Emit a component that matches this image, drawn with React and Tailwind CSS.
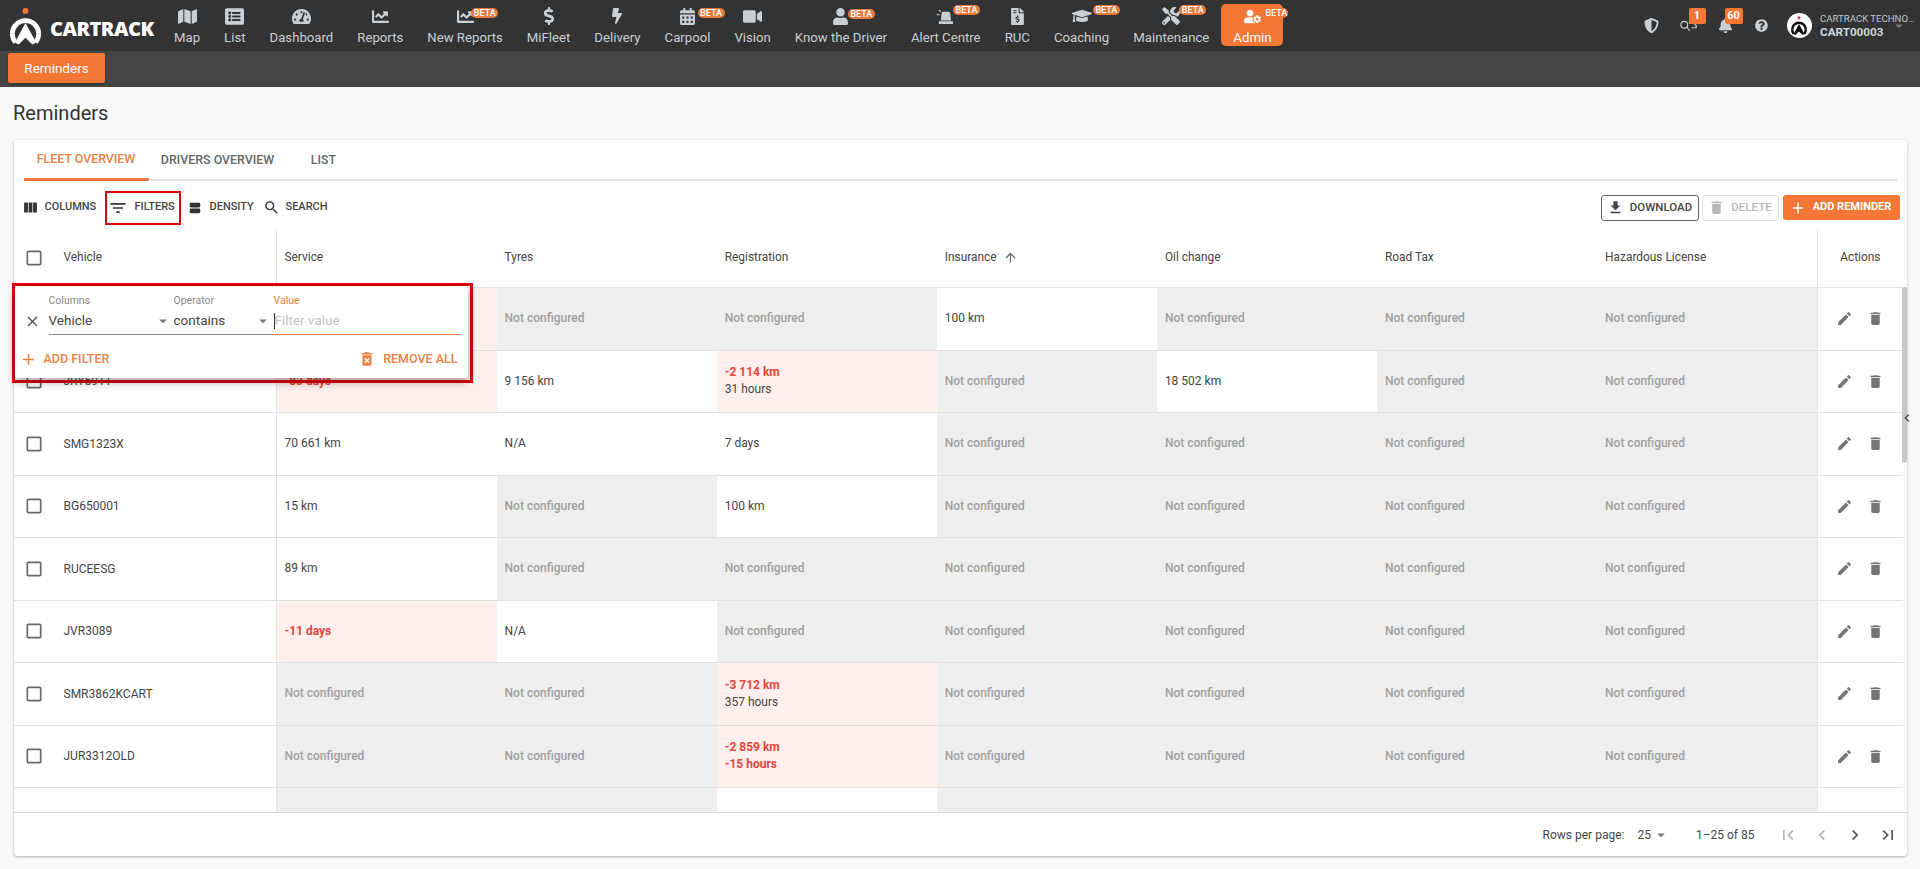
import React from "react";
import {
  FaMap, FaListAlt, FaTachometerAlt, FaChartLine, FaDollarSign, FaBolt, FaCalendarAlt, FaVideo, FaUser,
  FaFileInvoiceDollar, FaGraduationCap, FaTools, FaUserCog, FaShieldAlt, FaBell, FaQuestionCircle,
} from "react-icons/fa";
import {
  MdViewColumn, MdFilterList, MdViewAgenda, MdSearch, MdFileDownload, MdDelete, MdAdd, MdEdit, MdDeleteForever,
  MdClose, MdArrowDropDown, MdArrowUpward, MdFirstPage, MdChevronLeft, MdChevronRight, MdLastPage, MdCheckBoxOutlineBlank,
} from "react-icons/md";

function LogoMark({ className, fg = "#ffffff", dot = "#f47735" }) {
  return (
    <svg viewBox="0 0 36 38" className={className}>
      <circle cx="18" cy="3.5" r="3" fill={dot} />
      <path d="M4.5 27 A13.5 13.5 0 0 1 31.5 27" fill="none" stroke={fg} strokeWidth="5" />
      <path d="M2 27 h5 c0 3 1 5 2 6.5 l-3 4 C3.5 35 2 31.500 2 27 Z" fill={fg} />
      <path d="M34 27 h-5 c0 3 -1 5 -2 6.500 l3 4 C32.500 35 34 31.500 34 27 Z" fill={fg} />
      <path d="M18 16 L29 36 L25 38 L18 31 L11 38 L7 36 Z" fill={fg} />
    </svg>
  );
}

function SirenIcon({ className }) {
  return (
    <svg viewBox="0 0 24 20" className={className} fill="currentColor">
      <path d="M7 6 a2 2 0 0 1 2 -2 h7 a2 2 0 0 1 2 2 l1 9 H6 Z" />
      <rect x="3.500" y="16" width="18" height="3.500" rx="0.500" />
      <path d="M1 7 h3.500 v1.500 H1 Z M4.300 1.500 l2.200 2 -1 1 -2.200 -2 Z" />
    </svg>
  );
}

function SearchCarIcon({ className }) {
  return (
    <svg viewBox="0 0 24 16" className={className} fill="none" stroke="currentColor" strokeWidth="1.500">
      <circle cx="7" cy="7" r="4.500" />
      <path d="M10.500 10.500 L14.500 15" />
      <path d="M13 5 h7 l3 3 v3 h-6" />
    </svg>
  );
}

const navItems = [
  { label: "Map", Icon: FaMap, size: "text-[19px]" },
  { label: "List", Icon: FaListAlt, size: "text-[19px]" },
  { label: "Dashboard", Icon: FaTachometerAlt, size: "text-[19px]" },
  { label: "Reports", Icon: FaChartLine, size: "text-[17px]" },
  { label: "New Reports", Icon: FaChartLine, size: "text-[17px]", beta: "left-[56px] top-[4px]" },
  { label: "MiFleet", Icon: FaDollarSign, size: "text-[18px]" },
  { label: "Delivery", Icon: FaBolt, size: "text-[16px]", low: true },
  { label: "Carpool", Icon: FaCalendarAlt, size: "text-[17px]", beta: "left-[45px] top-[4px]" },
  { label: "Vision", Icon: FaVideo, size: "text-[19px]" },
  { label: "Know the Driver", Icon: FaUser, size: "text-[17px]", beta: "left-[65px] top-[5px]" },
  { label: "Alert Centre", Icon: SirenIcon, size: "w-[19px] h-[17px]", beta: "left-[54px] top-[1px]" },
  { label: "RUC", Icon: FaFileInvoiceDollar, size: "text-[17px]" },
  { label: "Coaching", Icon: FaGraduationCap, size: "text-[20px]", beta: "left-[51px] top-[1px]" },
  { label: "Maintenance", Icon: FaTools, size: "text-[18px]", beta: "left-[58px] top-[1px]" },
];

function Beta({ pos }) {
  return (
    <span className={`absolute ${pos} flex h-[10px] w-[27px] items-center justify-center rounded-full bg-[#e97a3e] text-[9px] leading-none font-medium text-white`}>
      BETA
    </span>
  );
}

function NavItem({ label, Icon, size, beta, low }) {
  return (
    <div className="relative flex h-[42px] flex-col items-center px-3 text-[#c9cfd3]">
      <div className="flex h-[24px] items-center justify-center pt-[1px]">
        <Icon className={size} />
      </div>
      <span className={`mt-[3px] text-[13.2px] leading-[16px] whitespace-nowrap ${low ? "pt-[1px]" : ""}`}>{label}</span>
      {beta && <Beta pos={beta} />}
    </div>
  );
}

function Header() {
  return (
    <header className="flex h-[51px] shrink-0 items-start bg-[#333333]">
      <div className="flex h-[51px] w-[162px] shrink-0 items-center pl-2">
        <LogoMark className="mt-[1px] h-[38px] w-[35px] shrink-0" />
        <span className="mt-[6px] ml-[7px] font-['Open_Sans',sans-serif] text-[20px] font-extrabold tracking-[-0.5px] text-white">CARTRACK</span>
      </div>
      <nav className="flex items-start pt-[4px]">
        {navItems.map((n) => <NavItem key={n.label} {...n} />)}
        <div className="relative flex h-[42px] flex-col items-center rounded-[5px] bg-[#f47735] px-3 text-white">
          <div className="flex h-[24px] items-center justify-center pt-[2px]">
            <FaUserCog className="text-[17px]" />
          </div>
          <span className="mt-[3px] text-[13.2px] leading-[16px]">Admin</span>
          <span className="absolute left-[43px] top-[4px] flex h-[10px] w-[24px] items-center justify-center rounded-full bg-[#f47735] text-[9px] leading-none font-medium text-white">BETA</span>
        </div>
      </nav>
      <div className="ml-auto flex h-[51px] items-center text-[#c9cfd3]">
        <FaShieldAlt className="text-[15px]" />
        <div className="relative ml-[17px] flex w-[24px] justify-center">
          <SearchCarIcon className="h-[13px] w-[18px]" />
          <span className="absolute left-[13px] top-[-11px] flex h-[16px] w-[17px] items-center justify-center rounded-[2px] bg-[#f47735] text-[11px] font-bold text-white">1</span>
        </div>
        <div className="relative ml-[16px] flex w-[20px] justify-center">
          <FaBell className="text-[15px]" />
          <span className="absolute left-[9px] top-[-10px] flex h-[16px] w-[18px] items-center justify-center rounded-[2px] bg-[#f47735] text-[11px] font-bold text-white">60</span>
        </div>
        <FaQuestionCircle className="ml-[19px] text-[13px]" />
        <div className="ml-[19px] flex h-[25px] w-[25px] items-center justify-center rounded-full bg-white">
          <LogoMark className="h-[19px] w-[18px]" fg="#111111" dot="#dd3333" />
        </div>
        <div className="ml-[8.5px] w-[95px]">
          <div className="truncate text-[9.6px] leading-[13px] text-[#bfc5c9]">CARTRACK TECHNOLOGIES</div>
          <div className="text-[11.7px] leading-[15px] font-bold text-[#cfd6da]">CART00003</div>
        </div>
        <MdArrowDropDown className="mr-[12px] ml-[-25px] text-[18px] text-[#777777]" />
      </div>
    </header>
  );
}

const NC = { t: "nc" };
const R = (a, b, bRed) => ({ t: "red", a, b, bRed });
const T = (a) => ({ t: "text", a });

const rows = [
  { v: "", hide: true, c: [R(""), NC, NC, T("100 km"), NC, NC, NC] },
  { v: "JRY591T", c: [R("-83 days"), T("9 156 km"), R("-2 114 km", "31 hours"), NC, T("18 502 km"), NC, NC] },
  { v: "SMG1323X", c: [T("70 661 km"), T("N/A"), T("7 days"), NC, NC, NC, NC] },
  { v: "BG650001", c: [T("15 km"), NC, T("100 km"), NC, NC, NC, NC] },
  { v: "RUCEESG", c: [T("89 km"), NC, NC, NC, NC, NC, NC] },
  { v: "JVR3089", c: [R("-11 days"), T("N/A"), NC, NC, NC, NC, NC] },
  { v: "SMR3862KCART", c: [NC, NC, R("-3 712 km", "357 hours"), NC, NC, NC, NC] },
  { v: "JUR3312OLD", c: [NC, NC, R("-2 859 km", "-15 hours", true), NC, NC, NC, NC] },
  { v: "", c: [NC, NC, T(""), NC, NC, NC, NC], last: true },
];

function Cell({ c }) {
  const base = "flex w-[220.1px] shrink-0 flex-col justify-center pl-2 text-[12px] leading-[17px]";
  if (c.t === "nc") return <div className={`${base} bg-[#eeeeee] font-medium text-[#a0a0a0]`}>Not configured</div>;
  if (c.t === "red")
    return (
      <div className={`${base} bg-[#fff0ee]`}>
        <span className="font-bold text-[#e8453c]">{c.a}</span>
        {c.b && <span className={c.bRed ? "font-bold text-[#e8453c]" : "text-[#444444]"}>{c.b}</span>}
      </div>
    );
  return <div className={`${base} bg-white text-[#444444]`}>{c.a}</div>;
}

function Row({ r }) {
  return (
    <div className="mr-[4px] flex h-[62.5px] shrink-0 border-b border-[#e0e0e0] bg-white">
      <div className="flex w-[263px] shrink-0 items-center border-r border-[#e4e4e4] pl-[10px] text-[12px] text-[#444444]">
        {!r.last && !r.hide && <MdCheckBoxOutlineBlank className="text-[20px] text-[#666666]" />}
        <span className="ml-[20px]">{r.v}</span>
      </div>
      {r.c.map((c, i) => <Cell key={i} c={c} />)}
      <div className="flex flex-1 items-center border-l border-[#e4e4e4] pl-[18px] text-[#757575]">
        {!r.last && (
          <>
            <MdEdit className="text-[17px]" />
            <MdDelete className="ml-[14px] text-[17px]" />
          </>
        )}
      </div>
    </div>
  );
}

function ToolButton({ Icon, label, iconClass, className }) {
  return (
    <div className={`flex items-center text-[11px] font-medium text-[#444444] ${className}`}>
      <Icon className={iconClass} />
      <span>{label}</span>
    </div>
  );
}

function FilterPanel() {
  return (
    <div className="absolute left-[-2px] top-[143px] z-20 h-[100px] w-[461px] border-[3px] border-[#e2000f] pt-[1px] pr-[2px] pb-[2px]">
      <div className="flex h-full flex-col rounded-[3px] bg-white shadow-[0_4px_10px_rgba(0,0,0,0.35)]">
        <div className="flex items-end pt-[7px] pl-[10px]">
          <div className="flex h-[27px] w-[24px] items-center">
            <MdClose className="ml-[-1px] text-[17px] text-[#555555]" />
          </div>
          <div className="w-[125px]">
            <div className="h-[13px] text-[10.5px] leading-[13px] text-[#8a8a8a]">Columns</div>
            <div className="flex h-[28px] items-center justify-between border-b border-[#888888] pr-[2px] text-[13.5px] text-[#444444]">
              <span>Vehicle</span>
              <MdArrowDropDown className="text-[18px] text-[#757575]" />
            </div>
          </div>
          <div className="w-[100px]">
            <div className="h-[13px] text-[10.5px] leading-[13px] text-[#8a8a8a]">Operator</div>
            <div className="flex h-[28px] items-center justify-between border-b border-[#888888] pr-[2px] text-[13.5px] text-[#444444]">
              <span>contains</span>
              <MdArrowDropDown className="text-[18px] text-[#757575]" />
            </div>
          </div>
          <div className="w-[187px]">
            <div className="h-[13px] text-[10.5px] leading-[13px] text-[#e77b3a]">Value</div>
            <div className="flex h-[28px] items-center border-b border-[#e9853f] text-[13.5px] text-[#c4c4c4]">
              <span className="h-[16px] w-[1px] bg-[#333333]" />
              <span>Filter value</span>
            </div>
          </div>
        </div>
        <div className="flex flex-1 items-center justify-between pt-[5px] pr-[10px] pl-[4px] text-[12.5px] font-medium text-[#ee7f3f]">
          <div className="flex items-center">
            <MdAdd className="text-[19px]" />
            <span className="ml-[6px]">ADD FILTER</span>
          </div>
          <div className="flex items-center">
            <MdDeleteForever className="text-[18px]" />
            <span className="ml-[7px]">REMOVE ALL</span>
          </div>
        </div>
      </div>
    </div>
  );
}

function Card() {
  return (
    <section className="relative mx-[13.5px] flex h-[716px] flex-col rounded-[3px] bg-white shadow-[0_1px_3px_rgba(0,0,0,0.3)]">
      <div className="mx-[10px] flex h-[41px] shrink-0 border-b-2 border-[#e0e0e0] text-[12.4px] font-medium">
        <div className="mb-[-2px] flex h-[41px] w-[125px] items-center justify-center border-b-[3px] border-[#f0763a] pt-[1px] text-[#ee7f3f]">FLEET OVERVIEW</div>
        <div className="flex w-[138px] items-center justify-center pt-[1px] text-[#666666]">DRIVERS OVERVIEW</div>
        <div className="ml-[12px] flex w-[50px] items-center justify-center pt-[1px] text-[#666666]">LIST</div>
      </div>
      <div className="flex h-[48px] shrink-0 items-center px-[10px] pt-[5px]">
        <ToolButton Icon={MdViewColumn} label="COLUMNS" iconClass="mr-[6px] ml-[-2px] text-[17px] text-[#333333]" className="w-[81px]" />
        <div className="flex h-[34px] w-[76px] items-center border-[2.5px] border-[#e2000f] pl-[1px] text-[11px] font-medium text-[#444444]">
          <MdFilterList className="mr-[7px] text-[20px] text-[#333333]" />
          <span>FILTERS</span>
        </div>
        <ToolButton Icon={MdViewAgenda} label="DENSITY" iconClass="mr-[8px] text-[14px] text-[#333333]" className="ml-[7px] w-[75px]" />
        <ToolButton Icon={MdSearch} label="SEARCH" iconClass="mr-[6px] text-[17px] text-[#333333]" />
        <div className="ml-auto flex items-center">
          <div className="flex h-[26px] w-[98px] items-center justify-center rounded-[3px] border border-[#666666] text-[11.5px] font-medium text-[#444444]">
            <MdFileDownload className="mr-[6px] text-[17px]" />DOWNLOAD
          </div>
          <div className="ml-[3px] flex h-[26px] w-[77px] items-center justify-center rounded-[3px] border border-[#e0e0e0] text-[11.5px] font-medium text-[#b8b8b8]">
            <MdDelete className="mr-[6px] text-[17px]" />DELETE
          </div>
          <div className="mr-[-3px] ml-[4px] flex h-[25px] w-[117px] items-center justify-center rounded-[3px] bg-[#f47735] pr-[2px] text-[11px] font-bold text-white">
            <MdAdd className="mr-[6px] text-[18px]" />ADD REMINDER
          </div>
        </div>
      </div>
      <div className="flex min-h-0 flex-1 flex-col overflow-hidden">
        <div className="flex h-[59px] shrink-0 border-b border-[#e0e0e0] text-[11.9px] text-[#444444]">
          <div className="flex w-[263px] shrink-0 items-center border-r border-[#e4e4e4] pl-[10px]">
            <MdCheckBoxOutlineBlank className="text-[20px] text-[#666666]" />
            <span className="ml-[20px]">Vehicle</span>
          </div>
          {["Service", "Tyres", "Registration", "Insurance", "Oil change", "Road Tax", "Hazardous License"].map((h) => (
            <div key={h} className="flex w-[220.1px] shrink-0 items-center pb-[1px] pl-2">
              {h}
              {h === "Insurance" && <MdArrowUpward className="ml-[6px] text-[15px] text-[#666666]" />}
            </div>
          ))}
          <div className="flex flex-1 items-center justify-center border-l border-[#e4e4e4] pr-[4px]">Actions</div>
        </div>
        {rows.map((r, i) => <Row key={i} r={r} />)}
      </div>
      <div className="flex h-[44px] shrink-0 items-center justify-end border-t border-[#d8d8d8] pr-[9px] text-[12px] text-[#444444]">
        <span>Rows per page:</span>
        <span className="ml-[13px]">25</span>
        <MdArrowDropDown className="ml-[1px] text-[18px] text-[#757575]" />
        <span className="ml-[26px]">1–25 of 85</span>
        <MdFirstPage className="ml-[23px] text-[20px] text-[#b5b5b5]" />
        <MdChevronLeft className="ml-[14px] text-[20px] text-[#b5b5b5]" />
        <MdChevronRight className="ml-[13px] text-[20px] text-[#555555]" />
        <MdLastPage className="ml-[13px] text-[20px] text-[#555555]" />
      </div>
      <FilterPanel />
      <div className="absolute left-[1888px] top-[147px] z-10 h-[176px] w-[5px] rounded-[3px] bg-[#c8c8c8]" />
      <MdChevronLeft className="absolute left-[1885px] top-[270px] z-10 text-[16px] text-[#444444]" />
    </section>
  );
}

export default function App() {
  return (
    <div className="flex h-[869px] w-[1920px] flex-col overflow-hidden bg-[#f9f9f9] font-[Roboto,sans-serif]">
      <Header />
      <div className="flex h-[36px] shrink-0 items-start bg-[#444444] pt-[2px] pl-2">
        <div className="flex h-[30px] w-[97px] items-center justify-center rounded-[2px] bg-[#f47735] text-[13.5px] text-white shadow-[0_1px_2px_rgba(0,0,0,0.3)]">Reminders</div>
      </div>
      <h1 className="flex h-[53px] shrink-0 items-center pb-[1px] pl-[13px] text-[20px] font-normal text-[#333333]">Reminders</h1>
      <Card />
    </div>
  );
}
